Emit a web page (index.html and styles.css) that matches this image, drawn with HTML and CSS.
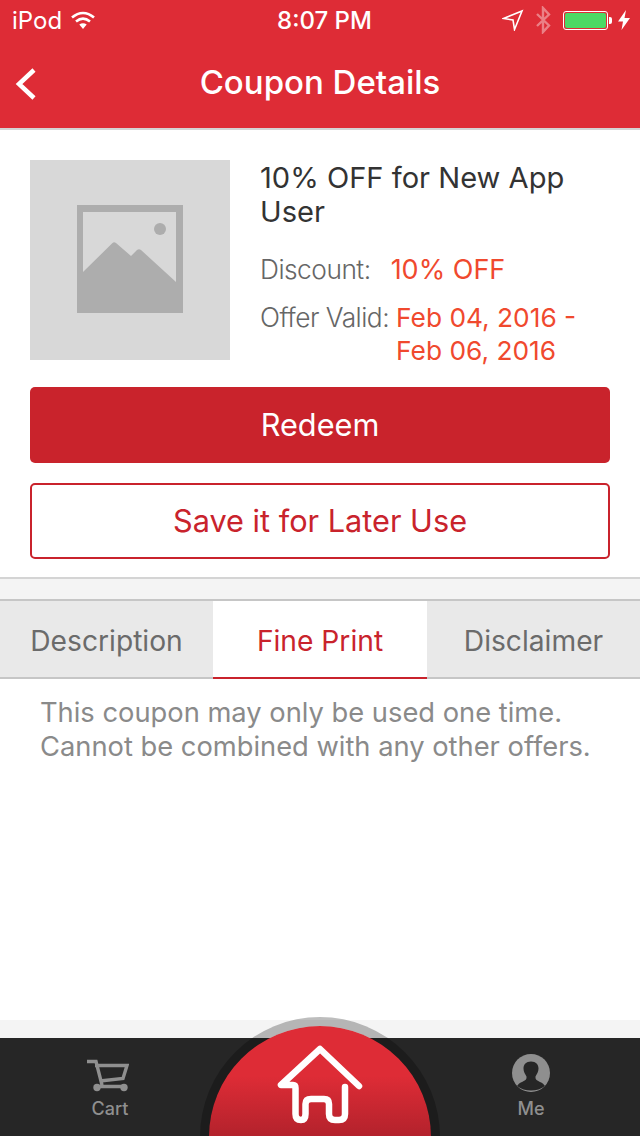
FILE: index.html
```html
<!DOCTYPE html>
<html lang="en">
<head>
  <meta charset="UTF-8">
  <meta name="viewport" content="width=device-width, initial-scale=1.0">
  <title>Coupon Details</title>
  <link rel="stylesheet" href="styles.css">
</head>
<body>
  <div class="app">
    <header class="top">
      <div class="status">
        <div class="status-left">
          <span>iPod</span>
          <svg class="wifi" width="26" height="20" viewBox="0 0 26 20"><path d="M2 7.500C9 1.500 17 1.500 24 7.500M6 11.500C10.500 7.800 15.500 7.800 20 11.500" fill="none" stroke="#fff" stroke-width="2.600"/><path d="M9.300 14.600C11.600 12.800 14.400 12.800 16.700 14.600L13 19Z" fill="#fff"/></svg>
        </div>
        <span class="clock">8:07 PM</span>
        <div class="status-right">
          <svg width="22" height="22" viewBox="0 0 22 22"><path d="M1.500 9.500L20 2L12.500 20.500L11 11Z" fill="none" stroke="#fff" stroke-width="1.600"/></svg>
          <svg class="bt" width="16" height="28" viewBox="0 0 16 28"><path d="M2 8L14 19.500L8 26V2L14 8.500L2 20" fill="none" stroke="#fff" stroke-width="2.400"/></svg>
          <div class="battery"><div class="battery-fill"></div></div>
          <div class="battery-tip"></div>
          <svg width="12" height="20" viewBox="0 0 12 20"><path d="M8 0L0 11.500H5L3.500 20L12 8H6.500Z" fill="#fff"/></svg>
        </div>
      </div>
      <div class="nav">
        <svg class="back" width="22" height="34" viewBox="0 0 22 34"><path d="M19 3L4 17L19 31" fill="none" stroke="#fff" stroke-width="4.500"/></svg>
        <h1>Coupon Details</h1>
      </div>
    </header>

    <section class="coupon">
      <div class="coupon-top">
        <div class="thumb">
          <svg width="106" height="108" viewBox="0 0 106 108">
            <path d="M0 0H106V108H0ZM6 7V67L35.500 38Q37 36.500 39 38L54 51L60 45Q62 43.500 64 45L99 77V7Z" fill="#adadad" fill-rule="evenodd"/>
            <circle cx="83" cy="24" r="6" fill="#adadad"/>
          </svg>
        </div>
        <div class="info">
          <h2>10% OFF for New App User</h2>
          <div class="row row-discount"><span class="key">Discount:</span><span class="val">10% OFF</span></div>
          <div class="row"><span class="key">Offer Valid:</span><span class="val val-date">Feb 04, 2016 - Feb 06, 2016</span></div>
        </div>
      </div>
      <button class="btn btn-solid">Redeem</button>
      <button class="btn btn-line">Save it for Later Use</button>
    </section>

    <div class="gap"></div>

    <nav class="tabs">
      <div class="tab">Description</div>
      <div class="tab tab-on">Fine Print</div>
      <div class="tab">Disclaimer</div>
    </nav>

    <p class="tab-body">This coupon may only be used one time. Cannot be combined with any other offers.</p>

    <div class="strip"></div>

    <footer class="bar">
      <div class="bar-item">
        <div class="bar-icon bar-icon-cart">
          <svg width="42" height="33" viewBox="0 0 42 33"><path d="M0 2.500H9L15 26M8 6.500H40L36 19.500L13 22M10 27.500H38" fill="none" stroke="#8f8f8f" stroke-width="3.400"/><circle cx="10" cy="28.500" r="3.700" fill="#8f8f8f"/><circle cx="37" cy="28.500" r="3.700" fill="#8f8f8f"/></svg>
        </div>
        <span>Cart</span>
      </div>
      <div class="bar-item">
        <div class="bar-icon">
          <svg width="38" height="38" viewBox="0 0 38 38"><circle cx="19" cy="19" r="19" fill="#8f8f8f"/><path d="M19 7.500C14 7.500 11.500 10.500 11.500 14.500C11.500 17.500 13 20 14.500 22.500C15 25 13.500 26.500 10 28C7.500 29 6 30.500 5 32Q11 36.500 19 36.500Q27 36.500 33 32C32 30.500 30.500 29 28 28C24.500 26.500 23 25 23.500 22.500C25 20 26.500 17.500 26.500 14.500C26.500 10.500 24 7.500 19 7.500Z" fill="#262626"/></svg>
        </div>
        <span>Me</span>
      </div>
    </footer>

    <div class="home">
      <svg width="88" height="84" viewBox="0 0 88 84"><path d="M83 43L44 6L5 42H17Q19.500 42 19.500 45V71Q19.500 77 25 77Q29.500 77 29.500 71V61Q29.500 56 35 56H48Q53 56 53 61V71Q53 77 59 77H63Q69 77 69 71V44" fill="none" stroke="#fff" stroke-width="6.500" stroke-linecap="round" stroke-linejoin="round"/></svg>
    </div>
  </div>
</body>
</html>
```

FILE: styles.css
```css
* {
  box-sizing: border-box;
}
html, body {
  margin: 0;
  padding: 0;
}
body {
  font-family: 'Inter', 'Liberation Sans', sans-serif;
  background-color: white;
}
.app {
  position: relative;
  width: 640px;
  height: 1136px;
  display: flex;
  flex-direction: column;
  overflow: hidden;
}
.top {
  height: 130px;
  background-color: #de2c36;
  border-bottom: 2px solid #d4d4d4;
  color: white;
}
.status {
  position: relative;
  height: 40px;
  padding: 0 10px 0 12px;
  display: flex;
  justify-content: space-between;
  align-items: center;
  font-size: 24px;
}
.status-left {
  display: flex;
  align-items: center;
  gap: 8px;
}
.clock {
  position: absolute;
  left: 9px;
  right: 0;
  text-align: center;
  font-weight: 500;
}
.status-right {
  display: flex;
  align-items: center;
}
.bt {
  opacity: 0.4;
  margin: 0 12px 0 11px;
}
.battery {
  width: 45px;
  height: 19px;
  border: 1px solid white;
  border-radius: 3px;
  padding: 1px;
}
.battery-fill {
  height: 100%;
  background-color: #4cd964;
  border-radius: 2px;
}
.battery-tip {
  width: 3px;
  height: 7px;
  margin: 0 6px 0 1px;
  background-color: white;
  border-radius: 0 2px 2px 0;
}
.nav {
  position: relative;
  height: 88px;
  padding-bottom: 4px;
  display: flex;
  align-items: center;
  justify-content: center;
}
.back {
  position: absolute;
  left: 15px;
  top: 27px;
}
h1 {
  margin: 0;
  font-size: 33px;
  font-weight: 500;
}
.coupon {
  height: 447px;
  padding: 30px 30px 0;
}
.coupon-top {
  display: flex;
  height: 227px;
}
.thumb {
  width: 200px;
  height: 200px;
  padding-bottom: 2px;
  background-color: #d8d8d8;
  display: flex;
  align-items: center;
  justify-content: center;
}
.info {
  flex: 1;
  padding-left: 30px;
}
h2 {
  margin: 0 0 24px;
  padding-top: 1px;
  font-size: 29.100px;
  line-height: 34px;
  font-weight: 400;
  color: #333;
}
.row {
  display: flex;
  font-size: 26.300px;
  line-height: 33px;
  font-weight: 300;
  color: #666;
}
.row-discount {
  margin-bottom: 15px;
}
.key {
  margin-right: 7px;
  letter-spacing: -0.5px;
}
.row-discount .key {
  margin-right: 20px;
}
.val {
  color: #f0492e;
  font-weight: 400;
}
.row-discount .val {
  font-size: 27px;
}
.val-date {
  width: 200px;
}
.btn {
  display: block;
  width: 100%;
  height: 76px;
  border-radius: 5px;
  font-family: inherit;
  font-size: 30.700px;
  padding: 0 0 2px;
}
.btn-solid {
  background-color: #c9232c;
  border: none;
  color: white;
  margin-bottom: 20px;
}
.btn-line {
  background-color: white;
  border: 2px solid #c9232c;
  color: #c9232c;
}
.gap {
  height: 24px;
  background-color: #f4f4f4;
  border-top: 2px solid #d4d4d4;
  border-bottom: 2px solid #c6c6c6;
}
.tabs {
  display: flex;
  height: 78px;
}
.tab {
  width: 213px;
  flex: 1;
  display: flex;
  align-items: center;
  justify-content: center;
  padding-top: 3px;
  background-color: #e9e9e9;
  border-bottom: 2px solid #c6c6c6;
  color: #6b6b6b;
  font-size: 28.200px;
}
.tab-on {
  flex: none;
  width: 214px;
  background-color: white;
  border-bottom-color: #c9232c;
  color: #c9232c;
}
.tab-body {
  flex: 1;
  margin: 0;
  padding: 17px 40px 0;
  font-size: 27.300px;
  line-height: 34px;
  color: #8a8a8a;
}
.strip {
  height: 18px;
  background-color: #f4f4f4;
}
.bar {
  height: 98px;
  background-color: #262626;
  display: flex;
  justify-content: space-between;
  padding: 16px 59px 0 60px;
}
.bar-item {
  width: 100px;
  display: flex;
  flex-direction: column;
  align-items: center;
  gap: 6px;
  color: #8f8f8f;
  font-size: 18px;
  font-weight: 500;
}
.bar-icon {
  height: 38px;
  display: flex;
  align-items: flex-end;
}
.bar-icon-cart {
  padding-right: 4px;
}
.home {
  position: absolute;
  left: 200px;
  top: 1017px;
  width: 240px;
  height: 240px;
  border: 9px solid rgba(0, 0, 0, 0.26);
  border-radius: 50%;
  background: linear-gradient(#de2c36 0, #de2c36 50px, #b3222c 110px);
  background-clip: padding-box;
  display: flex;
  justify-content: center;
  padding-top: 17px;
}
.home svg {
  flex: none;
}
```
